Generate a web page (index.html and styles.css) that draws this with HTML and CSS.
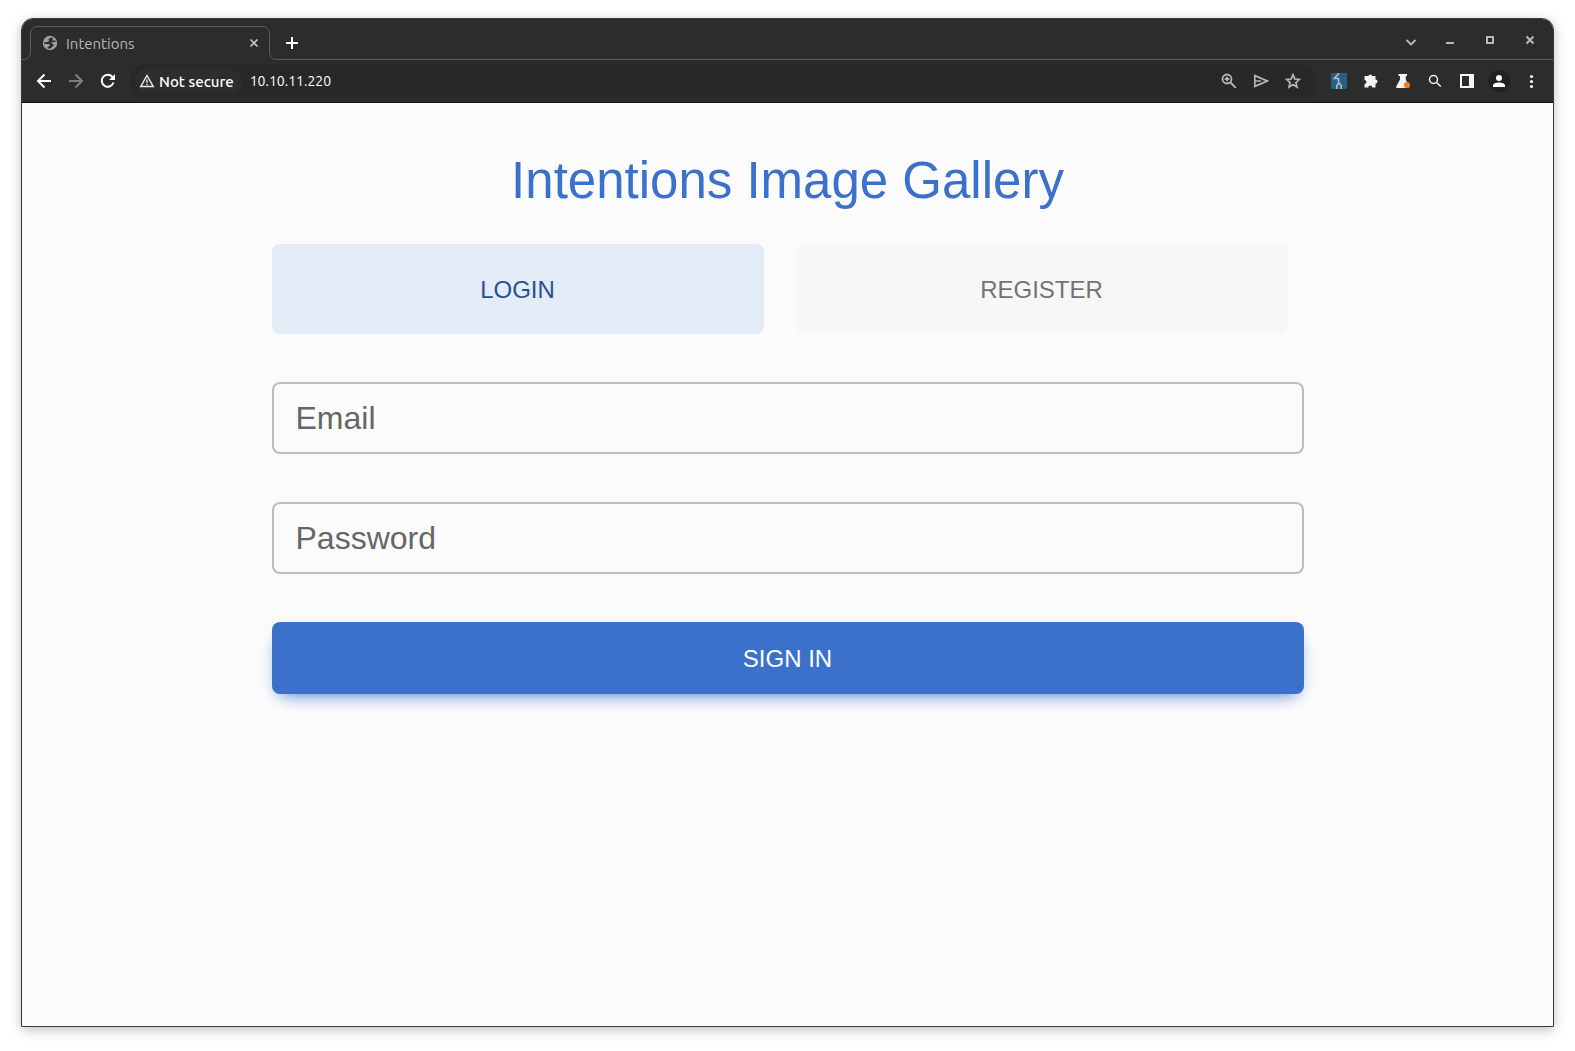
FILE: index.html
```html
<!DOCTYPE html>
<html lang="en">
<head>
<meta charset="utf-8">
<title>Intentions</title>
<link rel="stylesheet" href="styles.css">
</head>
<body>
<div class="window">
  <header class="chrome">
    <div class="tab-strip">
      <div class="tab">
        <svg class="tab-outline" width="256" height="34" viewBox="0 0 256 34" fill="none" stroke="#5f5f5f"><path d="M0 33.500C6 33.500 8.500 31 8.500 25V9C8.500 3 11 .5 17 .5H239C245 .5 247.500 3 247.500 9V25C247.500 31 250 33.500 256 33.500"/></svg>
        <svg class="favicon" width="16" height="16" viewBox="0 0 16 16"><circle cx="8" cy="8" r="7.200" fill="#9aa0a6"/><path d="M9.800 2.200L6.300 4.200L7.200 6.200L4.600 7.200H2.200V9H6.800C8 9 8.200 10.500 7.200 11.200L5.600 12V13.500L8.800 13.600C9.300 12 11.600 11.500 11.700 10C11.600 8.800 9.600 8.600 8.800 7.300H11.500L13.700 6.800V5.500H10L11 3.500Z" fill="#2c2c2c"/></svg>
        <span class="tab-title">Intentions</span>
        <button class="tab-close" aria-label="Close tab"><svg width="10" height="10" viewBox="0 0 10 10" stroke="#c4c4c4" stroke-width="1.600"><path d="M1.500 1.500L8.500 8.500M8.500 1.500L1.500 8.500"/></svg></button>
      </div>
      <div class="strip-rest">
        <button class="new-tab" aria-label="New tab"><svg width="14" height="14" viewBox="0 0 14 14" stroke="#fff" stroke-width="2"><path d="M7 1V13M1 7H13"/></svg></button>
        <div class="window-controls">
          <button class="control" aria-label="Search tabs"><svg width="16" height="16" viewBox="0 0 16 16" fill="none" stroke="#b8b8b8" stroke-width="1.800"><path d="M4.500 9L9 13.500L13.500 9"/></svg></button>
          <button class="control" aria-label="Minimize"><svg width="16" height="16" viewBox="0 0 16 16" fill="#b8b8b8"><path d="M4 11H12V13H4Z"/></svg></button>
          <button class="control" aria-label="Maximize"><svg width="16" height="16" viewBox="0 0 16 16" fill="none" stroke="#b8b8b8" stroke-width="2"><path d="M5 6H11V12H5Z"/></svg></button>
          <button class="control" aria-label="Close"><svg width="16" height="16" viewBox="0 0 16 16" stroke="#b8b8b8" stroke-width="2"><path d="M4.500 5.500L11.500 12.500M11.500 5.500L4.500 12.500"/></svg></button>
        </div>
      </div>
    </div>
    <div class="toolbar">
      <div class="tools">
        <button class="tool" aria-label="Back"><svg width="16" height="16" viewBox="0 0 16 16" fill="none" stroke="#fff" stroke-width="2"><path d="M15 8H2M8.500 1.500L2 8L8.500 14.500"/></svg></button>
        <button class="tool" aria-label="Forward"><svg width="16" height="16" viewBox="0 0 16 16" fill="none" stroke="#7e7e7e" stroke-width="2"><path d="M1 8H14M7.500 1.500L14 8L7.500 14.500"/></svg></button>
        <button class="tool" aria-label="Reload"><svg width="16" height="16" viewBox="0 0 16 16" fill="none" stroke="#fff" stroke-width="2"><path d="M13.500 9.500A6 6 0 1 1 12.300 3.800L13.500 5"/><path d="M15 1V7H9Z" fill="#fff" stroke="none"/></svg></button>
      </div>
      <div class="omnibox">
        <button class="security"><svg width="16" height="16" viewBox="0 0 16 16" fill="none" stroke="#e8e8e8" stroke-width="1.500"><path d="M8 2.500L14.200 13.500H1.800Z"/><path d="M8 6.500V9.800M8 10.700V12.200"/></svg>Not secure</button>
        <input class="address" type="text" aria-label="Address" value="10.10.11.220">
        <div class="tools">
          <button class="tool" aria-label="Zoom"><svg width="16" height="16" viewBox="0 0 16 16" fill="none" stroke="#b5b5b5" stroke-width="1.800"><circle cx="6" cy="6" r="4.500"/><path d="M9.500 9.500L14.800 14.800"/><path d="M6 3.700V8.300M3.700 6H8.300"/></svg></button>
          <button class="tool" aria-label="Share"><svg width="16" height="16" viewBox="0 0 16 16" fill="none" stroke="#b5b5b5" stroke-width="1.700"><path d="M1.800 2.600L14.200 8L1.800 13.400V8ZM2 8H8"/></svg></button>
          <button class="tool" aria-label="Bookmark"><svg width="16" height="16" viewBox="0 0 16 16" fill="none" stroke="#b5b5b5" stroke-width="1.700"><path d="M8 1.700L9.800 6L14.400 6.400L10.900 9.500L12 14.100L8 11.600L4 14.100L5.100 9.500L1.600 6.400L6.200 6Z"/></svg></button>
        </div>
      </div>
      <div class="tools">
        <button class="tool" aria-label="Proxy"><svg width="16" height="16" viewBox="0 0 16 16"><rect width="16" height="16" rx="1" fill="#285f87"/><path d="M8 0L3.500 5.500H7.500V9.500M5.800 16V12.500L8 10L10.200 12.500V16" fill="none" stroke="#b4bcc2" stroke-width="1.600"/></svg></button>
        <button class="tool" aria-label="Extensions"><svg width="16" height="16" viewBox="0 0 16 16" fill="#f4f4f4"><path d="M2 3H5.300A2 2 0 0 1 9.200 3H12.500V6.500A2 2 0 0 1 12.500 10.600V14.500H9.300A2 2 0 0 0 5.200 14.500H1.500V10.900A2 2 0 0 0 1.500 6.900V3.500Z"/></svg></button>
        <button class="tool" aria-label="Labs"><svg width="16" height="16" viewBox="0 0 16 16"><path d="M3.500 1H12V3H10.800V6.500L14 13.500Q14.200 15 13 15H2Q.8 15 1.200 13.500L5 6.500V3H3.500Z" fill="#f4f4f4"/><circle cx="12" cy="12" r="3.100" fill="#f97b16"/></svg></button>
        <button class="tool" aria-label="Search"><svg width="16" height="16" viewBox="0 0 16 16" fill="none" stroke="#f4f4f4" stroke-width="1.500"><circle cx="6.500" cy="6.500" r="4"/><path d="M9.500 9.500L13.800 13.500"/></svg></button>
        <button class="tool" aria-label="Side panel"><svg width="16" height="16" viewBox="0 0 16 16" fill="#f8f8f8" fill-rule="evenodd"><path d="M1 1H15V15H1ZM3 3V13H10V3Z"/></svg></button>
        <button class="tool profile" aria-label="Profile"><svg width="22" height="22" viewBox="0 0 22 22"><circle cx="11" cy="11" r="11" fill="#202124"/><circle cx="11" cy="8" r="3" fill="#fff"/><path d="M5 17V15.500C5 13.500 8 12.500 11 12.500S17 13.500 17 15.500V17Z" fill="#fff"/></svg></button>
        <button class="tool" aria-label="Menu"><svg width="16" height="16" viewBox="0 0 16 16" fill="#f4f4f4"><circle cx="8.500" cy="3.500" r="1.600"/><circle cx="8.500" cy="8.500" r="1.600"/><circle cx="8.500" cy="13.500" r="1.600"/></svg></button>
      </div>
    </div>
  </header>
  <main class="page">
    <h1 class="title">Intentions Image Gallery</h1>
    <nav class="modes">
      <a class="mode mode-active" href="#login">Login</a>
      <a class="mode" href="#register">Register</a>
    </nav>
    <form class="form">
      <input class="field" type="email" aria-label="Email" placeholder="Email">
      <input class="field" type="password" aria-label="Password" placeholder="Password">
      <button class="submit" type="button">Sign in</button>
    </form>
  </main>
</div>
</body>
</html>
```
FILE: styles.css
```css
* {
  box-sizing: border-box;
}

body {
  margin: 0;
  min-height: 100vh;
  padding: 18px 21px 24px;
  display: flex;
  flex-direction: column;
  background: #fff;
  font-family: "Liberation Sans", Arial, sans-serif;
}

button {
  margin: 0;
  padding: 0;
  border: 0;
  background: none;
  font: inherit;
}

svg {
  display: block;
  flex: none;
}

.window {
  flex: 1;
  display: flex;
  flex-direction: column;
  border: 1px solid #3a3a3a;
  border-radius: 12px 12px 0 0;
  background: #fbfbfb;
  box-shadow: 0 3px 12px rgba(0, 0, 0, 0.25);
}

.chrome {
  border-radius: 11px 11px 0 0;
  border-bottom: 1px solid #111;
  background: #2c2c2c;
  font-family: Ubuntu, "Noto Sans", sans-serif;
  font-size: 14px;
  color: #fff;
}

/* Tab strip */

.tab-strip {
  display: flex;
  height: 41px;
}

.tab {
  position: relative;
  display: flex;
  align-items: center;
  width: 256px;
  height: 34px;
  margin-top: 7px;
  padding: 0 19px 0 20px;
}

.tab-outline {
  position: absolute;
  inset: 0;
}

.tab-title {
  flex: 1;
  margin-left: 8px;
  color: #b8b8b8;
  font-size: 15px;
}

.tab-close {
  padding: 0 0 0 4px;
}

.strip-rest {
  flex: 1;
  display: flex;
  justify-content: space-between;
  border-bottom: 1px solid #5f5f5f;
}

.new-tab {
  padding: 8px 7px 0;
}

.window-controls {
  display: flex;
  padding-right: 3px;
}

.control {
  display: grid;
  place-items: center;
  width: 40px;
}

/* Toolbar */

.toolbar {
  display: flex;
  align-items: center;
  gap: 6px;
  height: 42px;
  padding: 0 6px;
}

.tools {
  display: flex;
}

.tool {
  display: grid;
  place-items: center;
  width: 32px;
  height: 32px;
}

.omnibox {
  flex: 1;
  display: flex;
  align-items: center;
  height: 34px;
  padding: 0 8px 0 5px;
  border-radius: 17px;
  background: #282828;
}

.security {
  display: flex;
  align-items: center;
  gap: 4px;
  height: 24px;
  padding: 0 8px 0 4px;
  border-radius: 12px;
  background: #2d2d2d;
  color: #fff;
  font-size: 15px;
  font-weight: 500;
}

.address {
  flex: 1;
  min-width: 0;
  padding: 0 8px;
  border: 0;
  background: none;
  color: #fff;
  font: inherit;
}

/* Login page */

.page {
  width: 100%;
  max-width: 1064px;
  margin: 0 auto;
  padding: 48px 16px;
}

.title {
  margin: 0 0 33px;
  color: #3b71ca;
  font-size: 51px;
  font-weight: 400;
  line-height: 60px;
  text-align: center;
}

.modes {
  display: flex;
  gap: 32px;
  margin-bottom: 48px;
  padding-right: 16px;
}

.mode {
  flex: 1;
  padding-top: 2px;
  border-radius: 8px;
  background: #f7f7f7;
  color: #737373;
  font-size: 24px;
  line-height: 88px;
  text-align: center;
  text-decoration: none;
  text-transform: uppercase;
}

.mode-active {
  background: #e3ebf7;
  color: #285192;
}

.form {
  display: grid;
  gap: 48px;
}

.field {
  width: 100%;
  height: 72px;
  padding: 0 22px;
  border: 2px solid #bdbdbd;
  border-radius: 8px;
  background: transparent;
  color: #4f4f4f;
  font: 32px "Liberation Sans", Arial, sans-serif;
}

.field::placeholder {
  color: #666;
  opacity: 1;
}

.submit {
  height: 72px;
  padding-top: 2px;
  border-radius: 8px;
  background: #3b71ca;
  box-shadow: 0 8px 18px -8px #3b71ca;
  color: #fff;
  font-size: 24px;
  text-transform: uppercase;
}
```
